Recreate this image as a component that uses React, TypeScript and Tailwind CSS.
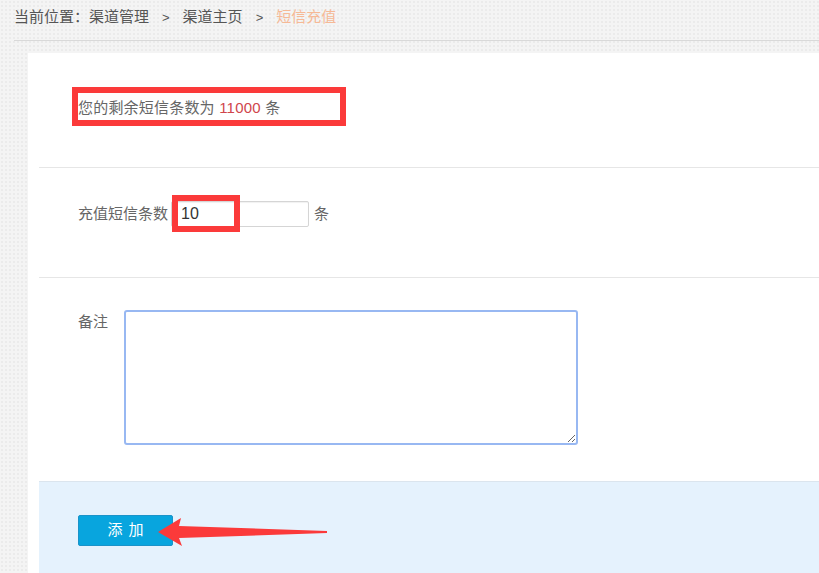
export default function App() {
  return (
    <div className="min-h-[573px] bg-[#f4f4f4] bg-[radial-gradient(#ebebeb_1px,transparent_1px)] bg-[length:4px_4px] pl-[14px] font-['Liberation_Sans','Noto_Sans_CJK_SC',sans-serif] text-[15px] text-[#666]">
      {/* Breadcrumb */}
      <div className="flex h-[41px] items-center border-b border-[#d9d9d9] pb-[5px] text-[#555]">
        <span>当前位置：渠道管理</span>
        <span className="mx-[13px] text-[13px]">&gt;</span>
        <span>渠道主页</span>
        <span className="mx-[13px] text-[13px]">&gt;</span>
        <span className="text-[#f6b996]">短信充值</span>
      </div>

      {/* Panel */}
      <div className="ml-[14px] mt-[12px] bg-white pl-[11px]">
        {/* Balance */}
        <div className="h-[115px] border-b border-[#e6e6e6] pl-[39px] pt-[44px]">
          <span className="relative inline-block leading-5 tracking-[0.2px]">
            您的剩余短信条数为 <span className="text-[#d0454c]">11000</span> 条
            <span className="absolute -left-[6px] -top-[11px] h-[39px] w-[274px] border-[6px] border-[#fb3a3a]" />
          </span>
        </div>

        {/* Amount */}
        <div className="h-[110px] border-b border-[#e6e6e6] pl-[39px] pt-[33px]">
          <div className="flex items-center">
            <span className="w-[93px] leading-5">充值短信条数</span>
            <div className="relative">
              <input
                defaultValue="10"
                className="h-[26px] w-[138px] rounded-[2px] border border-[#d5d5d5] px-[9px] text-[16px] text-[#333] shadow-[inset_0_1px_1px_rgba(0,0,0,0.06)] outline-none"
              />
              <span className="pointer-events-none absolute left-[1px] -top-[6px] h-[37px] w-[68px] border-[6px] border-[#fb3a3a]" />
            </div>
            <span className="ml-[5px] leading-5">条</span>
          </div>
        </div>

        {/* Remark */}
        <div className="flex h-[203px] pl-[39px] pt-[32px]">
          <span className="mt-[2px] w-[46px] leading-5">备注</span>
          <textarea className="h-[135px] w-[454px] rounded-[3px] border-2 border-[#98b8f2] outline-none" />
        </div>

        {/* Actions */}
        <div className="relative h-[93px] border-t border-[#dbe5ee] bg-[#e5f2fd] pl-[39px] pt-[33px]">
          <button className="h-[31px] w-[95px] rounded-[2px] border border-[#1a93c9] bg-[#08a5de] pl-[6px] text-[15px] tracking-[6px] text-white">
            添加
          </button>
          <svg className="absolute left-[111px] top-[31px]" width="180" height="38" viewBox="0 0 180 38">
            <polygon points="8,19 31,5 29,13 177,18 177,20 29,25 32,33" fill="#fb3a3a" />
          </svg>
        </div>
      </div>
    </div>
  );
}
